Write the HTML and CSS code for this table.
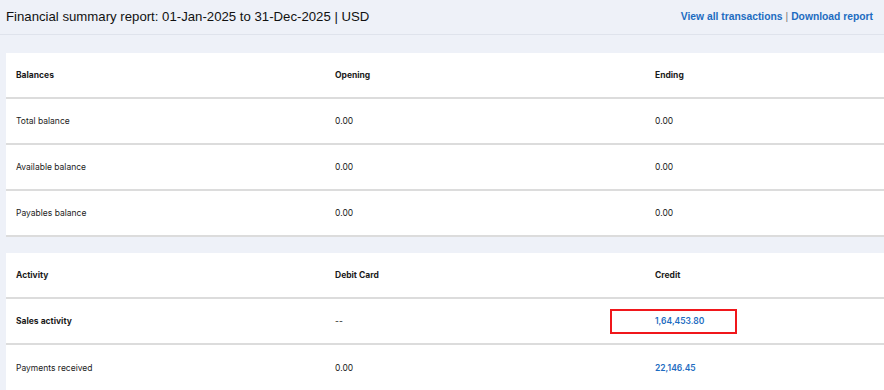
FILE: index.html
```html
<!DOCTYPE html>
<html>
<head>
<meta charset="utf-8">
<link rel="stylesheet" href="styles.css">
</head>
<body>
<div class="page">
  <header class="topbar">
    <h1 class="title">Financial summary report: 01-Jan-2025 to 31-Dec-2025 | USD</h1>
    <div class="links"><a class="link">View all transactions</a><span class="sep">|</span><a class="link">Download report</a></div>
  </header>
  <main class="content">
    <section class="panel">
      <div class="row head"><div class="cell">Balances</div><div class="cell">Opening</div><div class="cell">Ending</div></div>
      <div class="row"><div class="cell">Total balance</div><div class="cell">0.00</div><div class="cell">0.00</div></div>
      <div class="row"><div class="cell">Available balance</div><div class="cell">0.00</div><div class="cell">0.00</div></div>
      <div class="row"><div class="cell">Payables balance</div><div class="cell">0.00</div><div class="cell">0.00</div></div>
    </section>
    <section class="panel">
      <div class="row head"><div class="cell">Activity</div><div class="cell">Debit Card</div><div class="cell">Credit</div></div>
      <div class="row"><div class="cell strong">Sales activity</div><div class="cell">--</div><div class="cell amount highlight"><span class="mark"></span>1,64,453.80</div></div>
      <div class="row last"><div class="cell">Payments received</div><div class="cell">0.00</div><div class="cell amount">22,146.45</div></div>
    </section>
  </main>
</div>
</body>
</html>
```
FILE: styles.css
```css
* { box-sizing: border-box; }
html, body { margin: 0; padding: 0; }
body {
  background: #eef1f8;
  width: 884px;
  height: 390px;
  overflow: hidden;
  font-family: Inter, "Liberation Sans", sans-serif;
  color: #1b1b1b;
}
.topbar {
  display: flex;
  justify-content: space-between;
  align-items: center;
  height: 35px;
  padding: 0 11px 1px 6px;
  border-bottom: 1px solid #dfe3ec;
}
.title {
  margin: 0;
  font-family: "Liberation Sans", Arial, sans-serif;
  font-weight: normal;
  font-size: 13.2px;
  color: #111;
}
.links {
  font-family: "Liberation Sans", Arial, sans-serif;
  font-size: 10.3px;
  font-weight: bold;
  color: #1d6cc1;
}
.link { color: #1d6cc1; }
.sep { color: #777; margin: 0 3px; font-weight: normal; }
.content {
  padding: 18px 0 0 6px;
  display: flex;
  flex-direction: column;
  gap: 16px;
}
.panel { background: #fff; }
.row {
  display: grid;
  grid-template-columns: 319px 320px 1fr;
  height: 46px;
  align-items: center;
  border-bottom: 2px solid #dcdcdc;
  font-size: 8.5px;
}
.row.last { border-bottom: none; }
.row.head { font-weight: 700; }
.cell { padding-left: 10px; position: relative; }
.strong { font-weight: 700; }
.amount { color: #1d6cc1; font-weight: 600; }
.mark {
  position: absolute;
  left: -35px;
  top: -7px;
  width: 127px;
  height: 25px;
  border: 2px solid #f0171b;
}
```
